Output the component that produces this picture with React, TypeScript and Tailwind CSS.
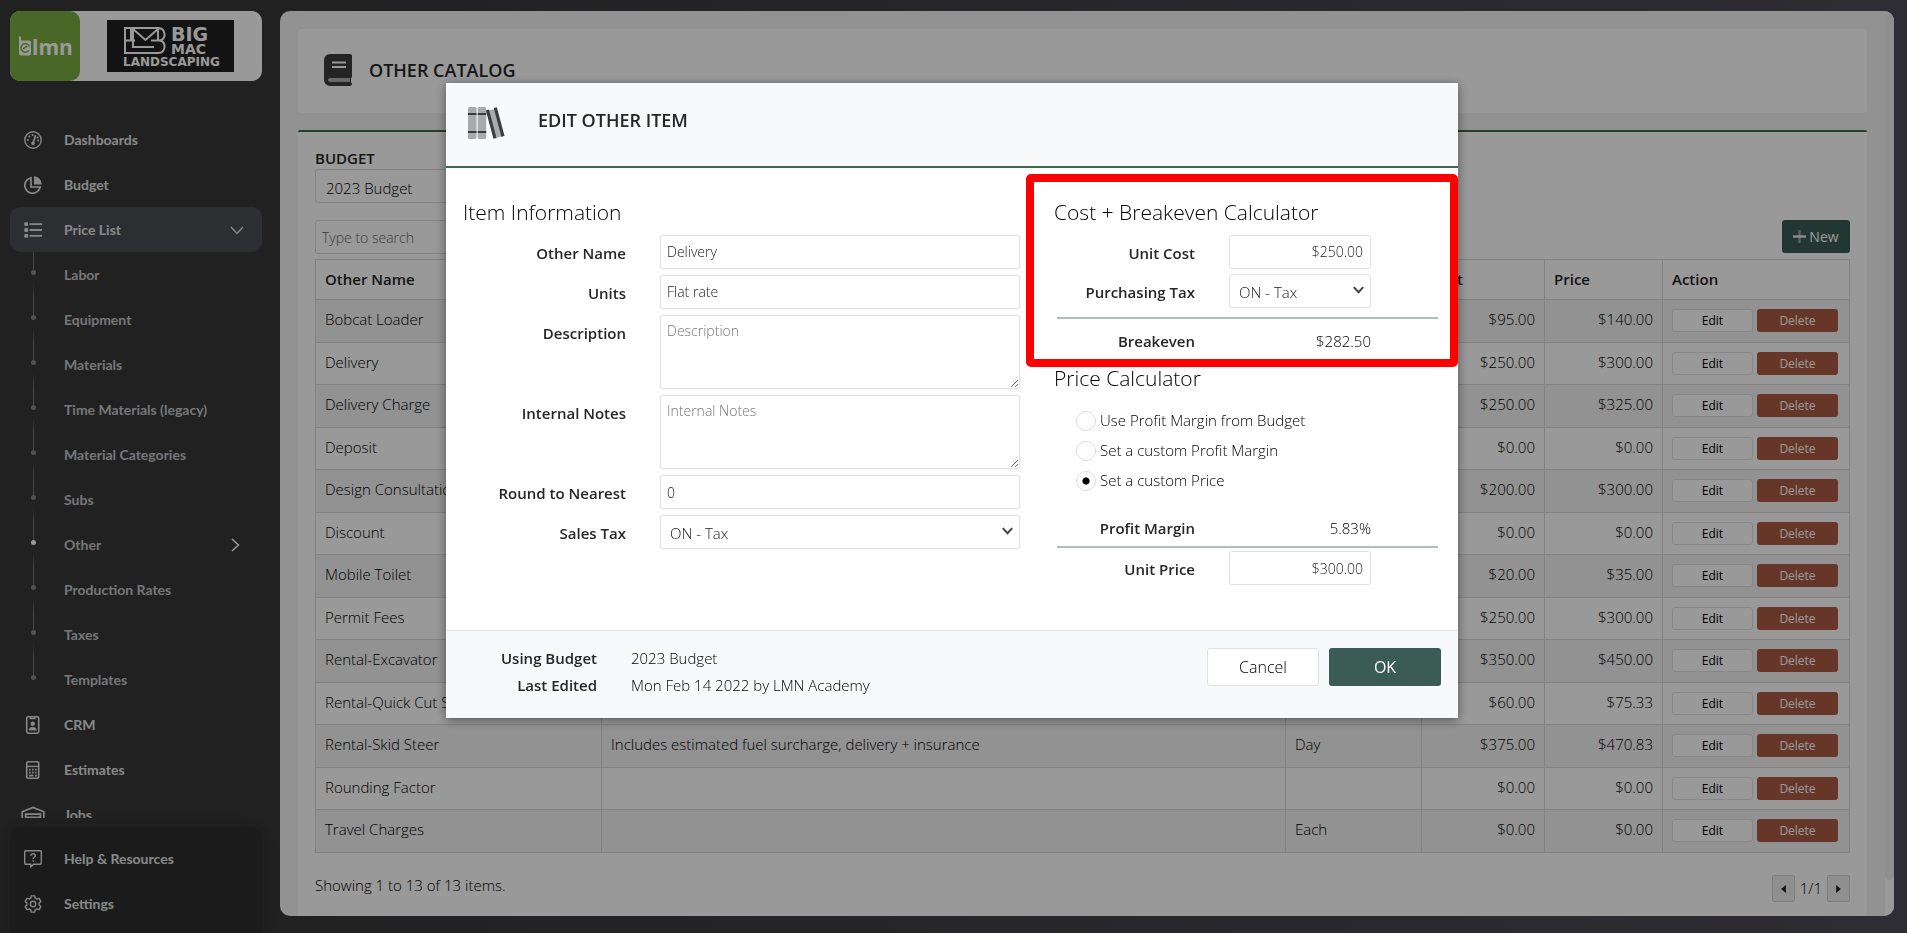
import type { ReactNode } from 'react'

type Item = {
	name: string
	description?: string
	unit?: string
	cost: string
	price: string
}

const items: Item[] = [
	{ name: 'Bobcat Loader', cost: '$95.00', price: '$140.00' },
	{ name: 'Delivery', cost: '$250.00', price: '$300.00' },
	{ name: 'Delivery Charge', cost: '$250.00', price: '$325.00' },
	{ name: 'Deposit', cost: '$0.00', price: '$0.00' },
	{ name: 'Design Consultation', cost: '$200.00', price: '$300.00' },
	{ name: 'Discount', cost: '$0.00', price: '$0.00' },
	{ name: 'Mobile Toilet', cost: '$20.00', price: '$35.00' },
	{ name: 'Permit Fees', cost: '$250.00', price: '$300.00' },
	{ name: 'Rental-Excavator', cost: '$350.00', price: '$450.00' },
	{ name: 'Rental-Quick Cut Saw', cost: '$60.00', price: '$75.33' },
	{
		name: 'Rental-Skid Steer',
		description: 'Includes estimated fuel surcharge, delivery + insurance',
		unit: 'Day',
		cost: '$375.00',
		price: '$470.83',
	},
	{ name: 'Rounding Factor', cost: '$0.00', price: '$0.00' },
	{ name: 'Travel Charges', unit: 'Each', cost: '$0.00', price: '$0.00' },
]

const subItems = [
	'Labor',
	'Equipment',
	'Materials',
	'Time Materials (legacy)',
	'Material Categories',
	'Subs',
	'Other',
	'Production Rates',
	'Taxes',
	'Templates',
]

function Stroke({ children }: { children: ReactNode }) {
	return (
		<svg viewBox="0 0 18 18" className="size-[18px]" fill="none" stroke="currentColor" strokeWidth="1.4" aria-hidden="true">
			{children}
		</svg>
	)
}

function GaugeIcon() {
	return (
		<Stroke>
			<circle cx="9" cy="9" r="8.2" />
			<path d="M11.6 4.2 9.4 11" strokeWidth="1.8" />
			<circle cx="9" cy="12.4" r="1.8" fill="currentColor" stroke="none" />
			<g fill="currentColor" stroke="none">
				<circle cx="3.9" cy="9" r="1" />
				<circle cx="5.3" cy="5.6" r="1" />
				<circle cx="8.6" cy="4" r="1" />
				<circle cx="13.6" cy="6.4" r="1" />
				<circle cx="14.2" cy="9.4" r="1" />
			</g>
		</Stroke>
	)
}

function PieIcon() {
	return (
		<Stroke>
			<path d="M10 .2A8.4 8.4 0 0 1 17.8 8.5H10z" fill="currentColor" stroke="none" />
			<path d="M7 1.8A7.8 7.8 0 1 0 16.2 11H7z" strokeWidth="1.7" />
		</Stroke>
	)
}

function ListIcon() {
	return (
		<Stroke>
			<g fill="currentColor" stroke="none">
				<rect x="0.3" y="1.2" width="3.8" height="3.8" rx="0.8" />
				<rect x="0.3" y="7.1" width="3.8" height="3.8" rx="0.8" />
				<rect x="0.3" y="13" width="3.8" height="3.8" rx="0.8" />
			</g>
			<path d="M5.6 3.1H18M5.6 9H18M5.6 14.9H18" strokeWidth="1.8" />
		</Stroke>
	)
}

function BadgeIcon() {
	return (
		<Stroke>
			<rect x="2.7" y="0.8" width="12" height="16.4" rx="1.6" strokeWidth="1.6" />
			<path d="M6.5 1v1.6h4.4V1" />
			<circle cx="8.7" cy="7.8" r="2.2" fill="currentColor" stroke="none" />
			<path d="M4.8 14.6c0-2.6 1.5-3.6 3.9-3.6s3.9 1 3.9 3.6z" fill="currentColor" stroke="none" />
		</Stroke>
	)
}

function CalculatorIcon() {
	return (
		<Stroke>
			<rect x="2.7" y="0.8" width="12" height="16.4" rx="1.4" strokeWidth="1.6" />
			<path d="M3 5.4h11.4" />
			<path d="M5 8.6h7.6M5 11.6h7.6" strokeWidth="1.8" strokeDasharray="1.7 1.25" />
			<path d="M5 14.6h4.5M11 14.6h1.7" strokeWidth="1.8" />
		</Stroke>
	)
}

function GarageIcon() {
	return (
		<svg viewBox="0 0 24 18" className="h-[18px] w-6" fill="none" stroke="currentColor" strokeWidth="1.7" aria-hidden="true">
			<path d="M1.2 18V5.8L12 1.4l10.8 4.4V18" />
			<path d="M4.6 18V8.2h14.8V18M4.6 11.4h14.8M4.6 14.6h14.8" />
		</svg>
	)
}

function HelpIcon() {
	return (
		<Stroke>
			<path d="M1.7.8h14.6a1 1 0 0 1 1 1v11.4a1 1 0 0 1-1 1H9.6L6.8 17v-2.8H1.7a1 1 0 0 1-1-1V1.8a1 1 0 0 1 1-1z" />
			<path d="M6.9 5.8c.1-1.3 1-2 2.2-2s2.2.8 2.2 1.9c0 1.5-2.1 1.6-2.1 3.2M9.2 10.2v1.5" />
		</Stroke>
	)
}

function GearIcon() {
	return (
		<Stroke>
			<circle cx="9" cy="9" r="2.7" />
			<path
				strokeLinejoin="round"
				d="M7.3.9h3.4l.6 2.3 1.5.9 2.3-.7 1.7 3-1.7 1.7v1.8l1.7 1.7-1.7 3-2.3-.7-1.5.9-.6 2.3H7.3l-.6-2.3-1.5-.9-2.3.7-1.7-3 1.7-1.7V8.1L1.2 6.4l1.7-3 2.3.7 1.5-.9z"
			/>
		</Stroke>
	)
}

function BookIcon() {
	return (
		<svg viewBox="0 0 28 32" className="h-8 w-7" aria-hidden="true">
			<path d="M6 0h20a2 2 0 0 1 2 2v20.5a2 2 0 0 1-1 1.7V28.3a2 2 0 0 1-1 3.7H6a6 6 0 0 1-6-6V6a6 6 0 0 1 6-6z" fill="#3d3d3d" />
			<path d="M6 24h20v4H6a2 2 0 0 1 0-4z" fill="#b0b0b0" />
			<path d="M8 8.5h14M8 13h14" stroke="#fff" strokeWidth="1.8" />
		</svg>
	)
}

function BooksIcon() {
	return (
		<svg viewBox="0 0 37 32" className="h-8 w-[37px]" aria-hidden="true">
			<rect x="0" y="0" width="8.5" height="32" rx="1.5" fill="#a8aaac" />
			<rect x="9.7" y="0" width="8.5" height="32" rx="1.5" fill="#a8aaac" />
			<path d="M0 7h8.5M9.7 7h8.5M0 25h8.5M9.7 25h8.5" stroke="#3d3d3d" strokeWidth="2.2" />
			<path d="M20 3.5 27 2l8 27-7 2z" fill="#a8aaac" />
			<path d="M19.4 3 27 31.3M27.3.6 35 29.4" stroke="#3d3d3d" strokeWidth="3.2" />
		</svg>
	)
}

function Chevron({ className }: { className: string }) {
	return (
		<svg viewBox="0 0 14 14" className={className} fill="none" stroke="currentColor" aria-hidden="true">
			<path d="M1 4 7 10.5 13 4" />
		</svg>
	)
}

function BrandCard() {
	return (
		<div className="flex h-[70px] shrink-0 items-stretch rounded-[10px] bg-white">
			<a href="#home" aria-label="LMN home" className="w-[70px] rounded-[10px] bg-[#7bae42]">
				<svg viewBox="0 0 70 70" className="size-[70px]" aria-hidden="true">
					<path d="M9 25l2 1v3.5h8a2 2 0 0 1 2 2V42a2.5 2.5 0 0 1-2.5 2.5h-7A2.5 2.5 0 0 1 9 42z" fill="#fff" />
					<path d="M13 37.8 17.2 35.2M19.4 35.6a4.3 4.3 0 1 0-.6 3.8" fill="none" stroke="#7bae42" strokeWidth="1.5" />
					<text x="22" y="44" fill="#fff" fontFamily="Open Sans, sans-serif" fontWeight="700" fontSize="21">
						lmn
					</text>
				</svg>
			</a>
			<div className="flex flex-1 items-center pl-[27px]">
				<svg viewBox="0 0 127 52" className="h-[52px] w-[127px] bg-[#212121]" role="img" aria-label="Big Mac Landscaping">
					<g fill="none" stroke="#fff" strokeWidth="2">
						<path d="M18 8h33.5a6.5 6.5 0 0 1 2 12.5 6.5 6.5 0 0 1-2 12.5H18z" />
						<path d="M18 20.5h10M44 20.5h9.5M24 8v12M26 9l12.500 11L51 9v11" />
						<path d="M26 9v18h21" />
					</g>
					<g fill="#fff" fontFamily="DejaVu Sans, sans-serif" fontWeight="700">
						<text x="64" y="21" fontSize="19">BIG</text>
						<text x="64" y="34" fontSize="14">MAC</text>
						<text x="16" y="46" fontSize="12">LANDSCAPING</text>
					</g>
				</svg>
			</div>
		</div>
	)
}

function NavItem({ icon, label, children }: { icon: ReactNode; label: string; children?: ReactNode }) {
	return (
		<a href="#nav" className="flex h-[45px] shrink-0 items-center rounded-[10px]">
			<span className="flex w-[46px] justify-center">{icon}</span>
			<span className="ml-2 flex-1">{label}</span>
			{children}
		</a>
	)
}

function Sidebar() {
	return (
		<aside className="flex w-[252px] shrink-0 flex-col font-['Lato',sans-serif] text-[14px] font-bold text-[#e2e3e5]">
			<BrandCard />
			<nav className="mt-9 flex min-h-0 flex-1 flex-col overflow-hidden">
				<NavItem icon={<GaugeIcon />} label="Dashboards" />
				<NavItem icon={<PieIcon />} label="Budget" />
				<div className="shrink-0 rounded-[10px] bg-[#4b4d53]">
					<NavItem icon={<ListIcon />} label="Price List">
						<Chevron className="mr-[18px] size-[14px] stroke-[1.5]" />
					</NavItem>
				</div>
				{subItems.map((label, i) => (
					<a key={label} href="#nav" className="flex h-[45px] shrink-0 items-center text-[#c4c5c8]">
						<span className="flex h-full w-[46px] flex-col items-center">
							<span className="h-[18px] w-px bg-[#77787c]" />
							<span className={label === 'Other' ? 'size-[5px] rounded-full bg-white' : 'size-[5px] rounded-full bg-[#86878b]'} />
							{i < subItems.length - 1 && (
								<span className="mt-2 w-px flex-1 bg-linear-to-b from-transparent to-[#77787c]" />
							)}
						</span>
						<span className="ml-2 flex-1">{label}</span>
						{label === 'Other' && <Chevron className="mr-5 size-[14px] -rotate-90 stroke-[1.5] text-white" />}
					</a>
				))}
				<NavItem icon={<BadgeIcon />} label="CRM" />
				<NavItem icon={<CalculatorIcon />} label="Estimates" />
				<NavItem icon={<GarageIcon />} label="Jobs" />
			</nav>
			<div className="mt-[9px] flex h-[106px] shrink-0 flex-col rounded-t-[10px] bg-[#2d2d2e] pt-[9px] shadow-[0_0_20px_rgba(0,0,0,0.2)]">
				<NavItem icon={<HelpIcon />} label="Help & Resources" />
				<NavItem icon={<GearIcon />} label="Settings" />
			</div>
		</aside>
	)
}

function Catalog() {
	return (
		<main className="mb-[17px] flex min-w-0 flex-1 overflow-hidden rounded-[10px] bg-[#f4f4f4] text-[15px] font-light text-black">
			<div className="min-w-0 flex-1 px-[18px] pt-[18px]">
				<header className="flex h-[84px] items-center gap-[17px] rounded-sm bg-white pb-[2px] pl-[26px]">
					<BookIcon />
					<h1 className="text-[18px] font-semibold text-[#262626]">OTHER CATALOG</h1>
				</header>
				<section className="mt-[17px] h-full rounded-t-[2px] border-t-2 border-[#3b6b49] bg-white px-[17px] pt-[15px]">
					<label htmlFor="budget" className="block h-[22px] font-semibold text-[#262626]">
						BUDGET
					</label>
					<select id="budget" className="block h-[34px] w-[280px] appearance-none rounded-[3px] border border-[#dcdcdc] px-[10px] pt-1">
						<option>2023 Budget</option>
					</select>
					<div className="mt-[17px] flex items-start justify-between">
						<input
							type="search"
							aria-label="Search items"
							placeholder="Type to search"
							className="h-[34px] w-[280px] rounded-[3px] border border-[#dcdcdc] px-[6px] text-[14px] placeholder:text-[#666]"
						/>
						<button className="flex h-[33px] w-[68px] items-center justify-center gap-[3px] rounded-[3px] bg-[#3b5c54] text-[14px] font-normal text-white">
							<svg viewBox="0 0 13 13" className="size-[13px]" aria-hidden="true">
								<path d="M6.5 0v13" stroke="#90a39d" strokeWidth="2.5" />
								<path d="M0 6.5h13" stroke="#e6e8e7" strokeWidth="2.5" />
							</svg>
							New
						</button>
					</div>
					<table className="mt-[5px] w-full table-fixed border-collapse [&_td]:border [&_td]:border-[#d9d9d9] [&_td]:px-[9px] [&_td]:pt-[9px] [&_td]:align-top [&_td]:leading-5 [&_th]:border [&_th]:border-[#d9d9d9] [&_th]:px-[9px] [&_th]:text-left [&_th]:font-semibold">
						<colgroup>
							<col className="w-[286px]" />
							<col />
							<col className="w-[136px]" />
							<col className="w-[123px]" />
							<col className="w-[118px]" />
							<col className="w-[187px]" />
						</colgroup>
						<thead className="text-[#262626]">
							<tr className="h-10">
								<th>Other Name</th>
								<th>Description</th>
								<th>Unit</th>
								<th>Cost</th>
								<th>Price</th>
								<th>Action</th>
							</tr>
						</thead>
						<tbody>
							{items.map((item) => (
								<tr key={item.name} className="odd:h-[43px] odd:bg-[#f3f3f3] even:h-[42px]">
									<td>{item.name}</td>
									<td>{item.description}</td>
									<td>{item.unit}</td>
									<td className="text-right">{item.cost}</td>
									<td className="text-right">{item.price}</td>
									<td>
										<div className="flex gap-1 text-[12px] font-normal">
											<button className="h-[23px] w-[81px] rounded-[3px] border border-[#e2e2e2] bg-white">Edit</button>
											<button className="h-[23px] w-[81px] rounded-[3px] bg-[#aa5c44] text-white">Delete</button>
										</div>
									</td>
								</tr>
							))}
						</tbody>
					</table>
					<div className="mt-[22px] flex items-start justify-between">
						<p className="leading-5">Showing 1 to 13 of 13 items.</p>
						<div className="flex items-center gap-[5px]">
							<button aria-label="Previous page" className="flex h-[27px] w-[23px] items-center justify-center rounded-[2px] border border-[#d2d2d2] bg-[#efefef]">
								<svg viewBox="0 0 6 10" className="h-[8px] w-[5px]"><path d="M6 0v10L0 5z" fill="#222" /></svg>
							</button>
							<span>1/1</span>
							<button aria-label="Next page" className="flex h-[27px] w-[23px] items-center justify-center rounded-[2px] border border-[#d2d2d2] bg-[#efefef]">
								<svg viewBox="0 0 6 10" className="h-[8px] w-[5px]"><path d="M0 0v10l6-5z" fill="#222" /></svg>
							</button>
						</div>
					</div>
				</section>
			</div>
			{/* Scroll track */}
			<div className="w-[9px] bg-white">
				<div className="h-24/25 rounded-b-full bg-[#eeeeee]" />
			</div>
		</main>
	)
}

const field = 'rounded-[3px] border border-[#e1e1e1] bg-white font-light text-[#222]'

function Row({ id, label, children }: { id: string; label: string; children: ReactNode }) {
	return (
		<div className="flex items-start gap-[34px]">
			<label htmlFor={id} className="h-[34px] w-[163px] text-right leading-9 font-semibold text-[#262626]">
				{label}
			</label>
			{children}
		</div>
	)
}

function CalcRow({ id, label, children }: { id: string; label: string; children: ReactNode }) {
	return (
		<div className="flex items-start gap-[34px]">
			<label htmlFor={id} className="h-[34px] w-[141px] text-right leading-9 font-semibold text-[#262626]">
				{label}
			</label>
			<div className="w-[142px]">{children}</div>
		</div>
	)
}

function TaxSelect({ id }: { id: string }) {
	return (
		<div className="relative flex-1">
			<select id={id} className={`block h-[34px] w-full appearance-none px-[9px] pt-[2px] text-[15px] ${field}`}>
				<option>ON - Tax</option>
			</select>
			<Chevron className="pointer-events-none absolute top-[10px] right-[7px] size-[11px] stroke-[2.5] text-[#444]" />
		</div>
	)
}

function EditDialog() {
	return (
		<div className="fixed inset-0 flex items-start justify-center bg-black/40 pt-[83px] pr-[3px]">
			<div
				role="dialog"
				aria-labelledby="dialog-title"
				className="w-full max-w-[1012px] bg-white text-[15px] font-light text-black shadow-[0_2px_10px_rgba(0,0,0,0.45)]"
			>
				<header className="flex h-[85px] gap-[33px] border-b-2 border-[#3b6b49] bg-[#f8f9fb] pt-6 pl-[22px]">
					<BooksIcon />
					<h2 id="dialog-title" className="text-[18px] leading-[26px] font-semibold text-[#262626]">
						EDIT OTHER ITEM
					</h2>
				</header>
				<form className="flex gap-[34px] px-[17px] pt-[30px] pb-[45px]">
					<section className="w-[557px]">
						<h3 className="mb-[9px] text-[21px] leading-7">Item Information</h3>
						<div className="flex flex-col gap-[6px]">
							<Row id="name" label="Other Name">
								<input id="name" defaultValue="Delivery" className={`h-[34px] flex-1 px-[6px] pb-[2px] text-[14px] ${field}`} />
							</Row>
							<Row id="units" label="Units">
								<input id="units" defaultValue="Flat rate" className={`h-[34px] flex-1 px-[6px] pb-[2px] text-[14px] ${field}`} />
							</Row>
							<Row id="description" label="Description">
								<textarea id="description" placeholder="Description" className={`h-[74px] flex-1 px-[6px] py-1 text-[14px] placeholder:text-[#777] ${field}`} />
							</Row>
							<Row id="notes" label="Internal Notes">
								<textarea id="notes" placeholder="Internal Notes" className={`h-[74px] flex-1 px-[6px] py-1 text-[14px] placeholder:text-[#777] ${field}`} />
							</Row>
							<Row id="round" label="Round to Nearest">
								<input id="round" defaultValue="0" className={`h-[34px] flex-1 px-[6px] text-[14px] ${field}`} />
							</Row>
							<Row id="sales-tax" label="Sales Tax">
								<TaxSelect id="sales-tax" />
							</Row>
						</div>
					</section>
					<section className="flex-1">
						<div className="relative">
							{/* Callout frame */}
							<div className="pointer-events-none absolute -top-6 -right-[17px] -bottom-2 -left-7 rounded-[5px] border-8 border-[#ff0000]" />
							<h3 className="mb-[9px] text-[21px] leading-7">Cost + Breakeven Calculator</h3>
							<div className="flex flex-col gap-[5px]">
								<CalcRow id="unit-cost" label="Unit Cost">
									<input id="unit-cost" defaultValue="$250.00" className={`block h-[34px] w-full px-[7px] pb-[2px] text-right text-[14px] ${field}`} />
								</CalcRow>
								<CalcRow id="purchase-tax" label="Purchasing Tax">
									<TaxSelect id="purchase-tax" />
								</CalcRow>
							</div>
							<hr className="mx-[3px] mt-[9px] border-t-2 border-[#afc1b6]" />
							<div className="mt-1">
								<CalcRow id="breakeven" label="Breakeven">
									<output id="breakeven" className="block text-right leading-9">$282.50</output>
								</CalcRow>
							</div>
						</div>
						<h3 className="mt-[5px] text-[21px] leading-7">Price Calculator</h3>
						<div className="mt-[14px] flex flex-col pl-[22px]">
							{['Use Profit Margin from Budget', 'Set a custom Profit Margin', 'Set a custom Price'].map((label, i) => (
								<label key={label} className="flex h-[30px] items-center gap-1">
									<input
										type="radio"
										name="pricing"
										defaultChecked={i === 2}
										className="size-5 appearance-none rounded-full border border-[#dcdcdc] bg-white checked:bg-radial checked:from-black checked:from-24% checked:to-white checked:to-31%"
									/>
									<span className="pb-[2px]">{label}</span>
								</label>
							))}
						</div>
						<div className="mt-[14px]">
							<CalcRow id="margin" label="Profit Margin">
								<output id="margin" className="block text-right leading-9">5.83%</output>
							</CalcRow>
						</div>
						<hr className="mx-[3px] mb-[3px] border-t-2 border-[#afc1b6]" />
						<CalcRow id="unit-price" label="Unit Price">
							<input id="unit-price" defaultValue="$300.00" className={`block h-[34px] w-full px-[7px] text-right text-[14px] ${field}`} />
						</CalcRow>
					</section>
				</form>
				<footer className="flex h-[88px] items-start justify-between border-t border-[#e1e3e5] bg-[#f8f9fb] px-[17px] pt-[14px]">
					<dl className="grid grid-cols-[134px_auto] gap-x-[34px] leading-[27px]">
						<dt className="text-right font-semibold text-[#262626]">Using Budget</dt>
						<dd>2023 Budget</dd>
						<dt className="text-right font-semibold text-[#262626]">Last Edited</dt>
						<dd>Mon Feb 14 2022 by LMN Academy</dd>
					</dl>
					<div className="mt-[3px] flex gap-[10px] text-[16px]">
						<button className="h-[38px] w-[112px] rounded-[3px] border border-[#e1e1e1] bg-white">Cancel</button>
						<button className="h-[38px] w-[112px] rounded-[3px] bg-[#3b5c54] font-medium text-white">OK</button>
					</div>
				</footer>
			</div>
		</div>
	)
}

export default function App() {
	return (
		<div className="flex h-screen gap-[18px] overflow-hidden bg-linear-to-r from-[#38383a] from-15% to-[#4d4b55] pt-[11px] pr-[13px] pl-[10px] font-['Open_Sans',sans-serif]">
			<Sidebar />
			<Catalog />
			<EditDialog />
		</div>
	)
}
